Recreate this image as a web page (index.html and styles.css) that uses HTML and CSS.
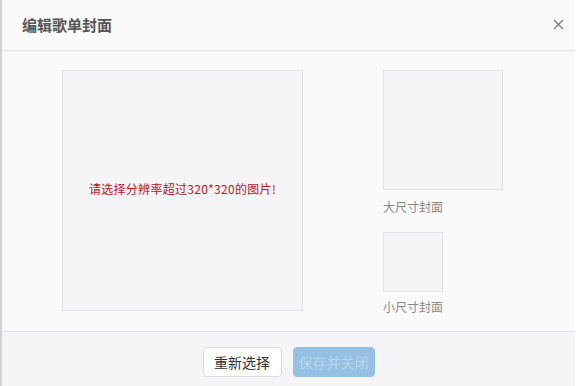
FILE: index.html
```html
<!DOCTYPE html>
<html lang="zh-CN">
<head>
<meta charset="utf-8">
<link rel="stylesheet" href="styles.css">
</head>
<body>
<div class="dialog">
  <div class="header">
    <span class="title">编辑歌单封面</span>
    <span class="close">
      <svg width="11" height="11" viewBox="0 0 11 11"><path d="M1 1L10 10M10 1L1 10" stroke="#7a7a7a" stroke-width="1.3" fill="none"/></svg>
    </span>
  </div>
  <div class="body">
    <div class="big">
      <span class="warn">请选择分辨率超过320*320的图片!</span>
    </div>
    <div class="side">
      <div class="prev-l"></div>
      <div class="label l1">大尺寸封面</div>
      <div class="prev-s"></div>
      <div class="label l2">小尺寸封面</div>
    </div>
  </div>
  <div class="footer">
    <button class="btn btn-white">重新选择</button>
    <button class="btn btn-blue">保存并关闭</button>
  </div>
</div>
</body>
</html>
```
FILE: styles.css
```css
html, body { margin: 0; padding: 0; background: #fff; }
body { font-family: "Noto Sans CJK SC", "Liberation Sans", sans-serif; }
.dialog {
  width: 573px;
  height: 386px;
  border-left: 2px solid #d2d2d2;
  background: #fafafa;
  display: flex;
  flex-direction: column;
}
.header {
  height: 50px;
  border-bottom: 1px solid #e1e1e1;
  display: flex;
  align-items: center;
  justify-content: space-between;
  padding: 0 11px 0 20px;
}
.title { font-size: 15px; font-weight: bold; color: #555; line-height: 20px; }
.close { display: flex; width: 11px; height: 11px; margin-top: -1px; }
.body {
  height: 280px;
  box-sizing: border-box;
  padding: 19px 0 0 60px;
  display: flex;
}
.big {
  width: 241px;
  height: 241px;
  box-sizing: border-box;
  border: 1px solid #e1e1e2;
  background: #f5f5f7;
  display: flex;
  align-items: center;
  justify-content: center;
}
.warn { color: #c0131a; font-size: 12px; line-height: 16px; margin-top: -4px; letter-spacing: 0.3px; }
.side { margin-left: 80px; display: flex; flex-direction: column; }
.prev-l, .prev-s {
  box-sizing: border-box;
  border: 1px solid #e1e1e2;
  background: #f5f5f7;
}
.prev-l { width: 120px; height: 120px; }
.prev-s { width: 60px; height: 60px; }
.label { font-size: 12px; line-height: 16px; color: #888; }
.l1 { margin: 9px 0 17px; }
.l2 { margin-top: 7px; }
.footer {
  flex: 1;
  border-top: 1px solid #e1e1e2;
  background: #f5f5f7;
  display: flex;
  justify-content: center;
  align-items: flex-start;
  padding-top: 15px;
  gap: 11px;
}
.btn {
  height: 30px;
  border-radius: 4px;
  font-family: "Noto Sans CJK SC", sans-serif;
  font-size: 14px;
  padding: 0;
  line-height: 28px;
}
.btn-white { width: 79px; background: #fff; border: 1px solid #dcdcdc; color: #333; }
.btn-blue { width: 82px; background: #95c0e3; border: 1px solid #95c0e3; color: #b9d6ee; }
```
